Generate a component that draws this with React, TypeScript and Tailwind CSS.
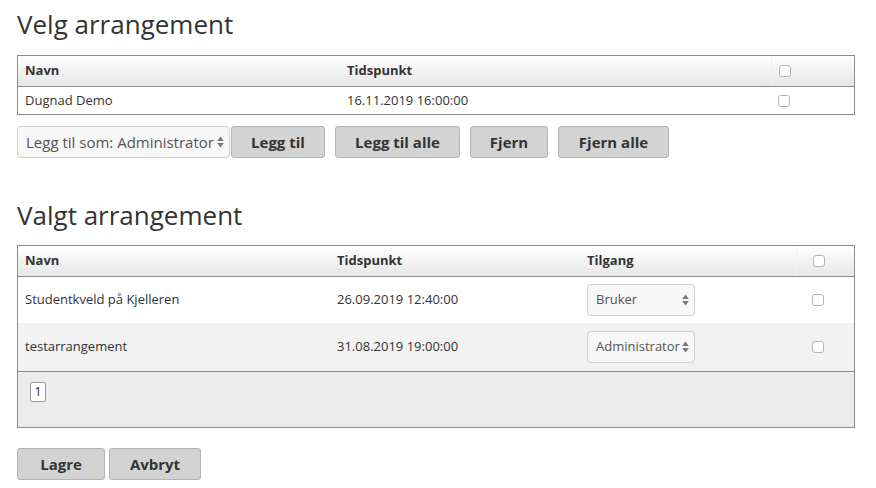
import React from "react";

const font = { fontFamily: '"Open Sans", "Noto Sans", sans-serif' };

function Arrows() {
  return (
    <svg width="7" height="12" viewBox="0 0 7 12" className="shrink-0">
      <path d="M3.5 0.5 L6.8 5 L0.2 5 Z" fill="#777" />
      <path d="M3.5 11.5 L6.8 7 L0.2 7 Z" fill="#777" />
    </svg>
  );
}

function Box() {
  return <span className="inline-block w-[12px] h-[12px] rounded-[3px] border border-[#b5b5b5] bg-white" />;
}

function Select({ label, w, size }: { label: string; w: string; size: string }) {
  return (
    <div
      className={`${w} ${size} h-[32px] flex items-center justify-between pl-[8px] pr-[5px] rounded-[4px] border border-[#cfcfcf] bg-[#f7f7f7] text-[#555]`}
    >
      <span className="whitespace-nowrap">{label}</span>
      <Arrows />
    </div>
  );
}

function Btn({ label, w }: { label: string; w: string }) {
  return (
    <button
      className={`${w} h-[32px] rounded-[3px] border border-[#b4b4b4] bg-[#d3d3d3] text-[#333] text-[15px] font-bold`}
    >
      {label}
    </button>
  );
}

const head = "bg-gradient-to-b from-white to-[#e6e6e6] border-b border-[#8c8c8c] text-[13px] font-bold text-[#333]";

export default function App() {
  const valgt = [
    { navn: "Studentkveld på Kjelleren", tid: "26.09.2019 12:40:00", tilgang: "Bruker", bg: "bg-white", h: "h-[46px]" },
    { navn: "testarrangement", tid: "31.08.2019 19:00:00", tilgang: "Administrator", bg: "bg-[#f2f2f2]", h: "h-[48px]" },
  ];

  return (
    <div style={font} className="w-[876px] h-[488px] bg-white text-[#333] pl-[17px] pr-[21px] pt-[6px]">
      <h1 className="text-[26px] leading-[36px] text-[#333]">Velg arrangement</h1>

      {/* velg tabell */}
      <div className="mt-[13px] border border-[#8c8c8c]">
        <div className={`grid grid-cols-[322px_431px_1fr] h-[31px] items-center ${head}`}>
          <div className="pl-[7px]">Navn</div>
          <div className="pl-[7px]">Tidspunkt</div>
          <div className="h-full flex items-center pl-[7px] border-l border-[#f0f0f0]">
            <Box />
          </div>
        </div>
        <div className="grid grid-cols-[322px_431px_1fr] h-[27px] items-center text-[13px]">
          <div className="pl-[7px]">Dugnad Demo</div>
          <div className="pl-[7px]">16.11.2019 16:00:00</div>
          <div className="pl-[7px] flex items-center">
            <Box />
          </div>
        </div>
      </div>

      <div className="mt-[11px] flex items-center">
        <Select label="Legg til som: Administrator" w="w-[213px]" size="text-[15px]" />
        <div className="ml-[1px] flex gap-[10px]">
          <Btn label="Legg til" w="w-[94px]" />
          <Btn label="Legg til alle" w="w-[125px]" />
          <Btn label="Fjern" w="w-[78px]" />
          <Btn label="Fjern alle" w="w-[111px]" />
        </div>
      </div>

      <h1 className="mt-[39px] text-[26px] leading-[36px] text-[#333]">Valgt arrangement</h1>

      {/* valgt tabell */}
      <div className="mt-[12px] border border-[#8c8c8c]">
        <div className={`grid grid-cols-[312px_250px_216px_1fr] h-[31px] items-center ${head}`}>
          <div className="pl-[7px]">Navn</div>
          <div className="pl-[7px]">Tidspunkt</div>
          <div className="pl-[7px]">Tilgang</div>
          <div className="h-full flex items-center pl-[16px] border-l border-[#f0f0f0]">
            <Box />
          </div>
        </div>
        {valgt.map((r) => (
          <div key={r.navn} className={`grid grid-cols-[312px_250px_216px_1fr] ${r.h} items-center text-[13px] ${r.bg}`}>
            <div className="pl-[7px]">{r.navn}</div>
            <div className="pl-[7px]">{r.tid}</div>
            <div className="pl-[7px]">
              <Select label={r.tilgang} w="w-[108px]" size="text-[13px]" />
            </div>
            <div className="pl-[16px] flex items-center">
              <Box />
            </div>
          </div>
        ))}
        <div className="h-[56px] bg-[#ececec] border-t border-[#8c8c8c] pl-[12px] pt-[6px]">
          <span className="inline-flex items-center justify-center w-[16px] h-[20px] border border-[#999] rounded-[2px] bg-white text-[13px]">
            1
          </span>
        </div>
      </div>

      <div className="mt-[20px] flex gap-[4px]">
        <Btn label="Lagre" w="w-[88px]" />
        <Btn label="Avbryt" w="w-[92px]" />
      </div>
    </div>
  );
}
